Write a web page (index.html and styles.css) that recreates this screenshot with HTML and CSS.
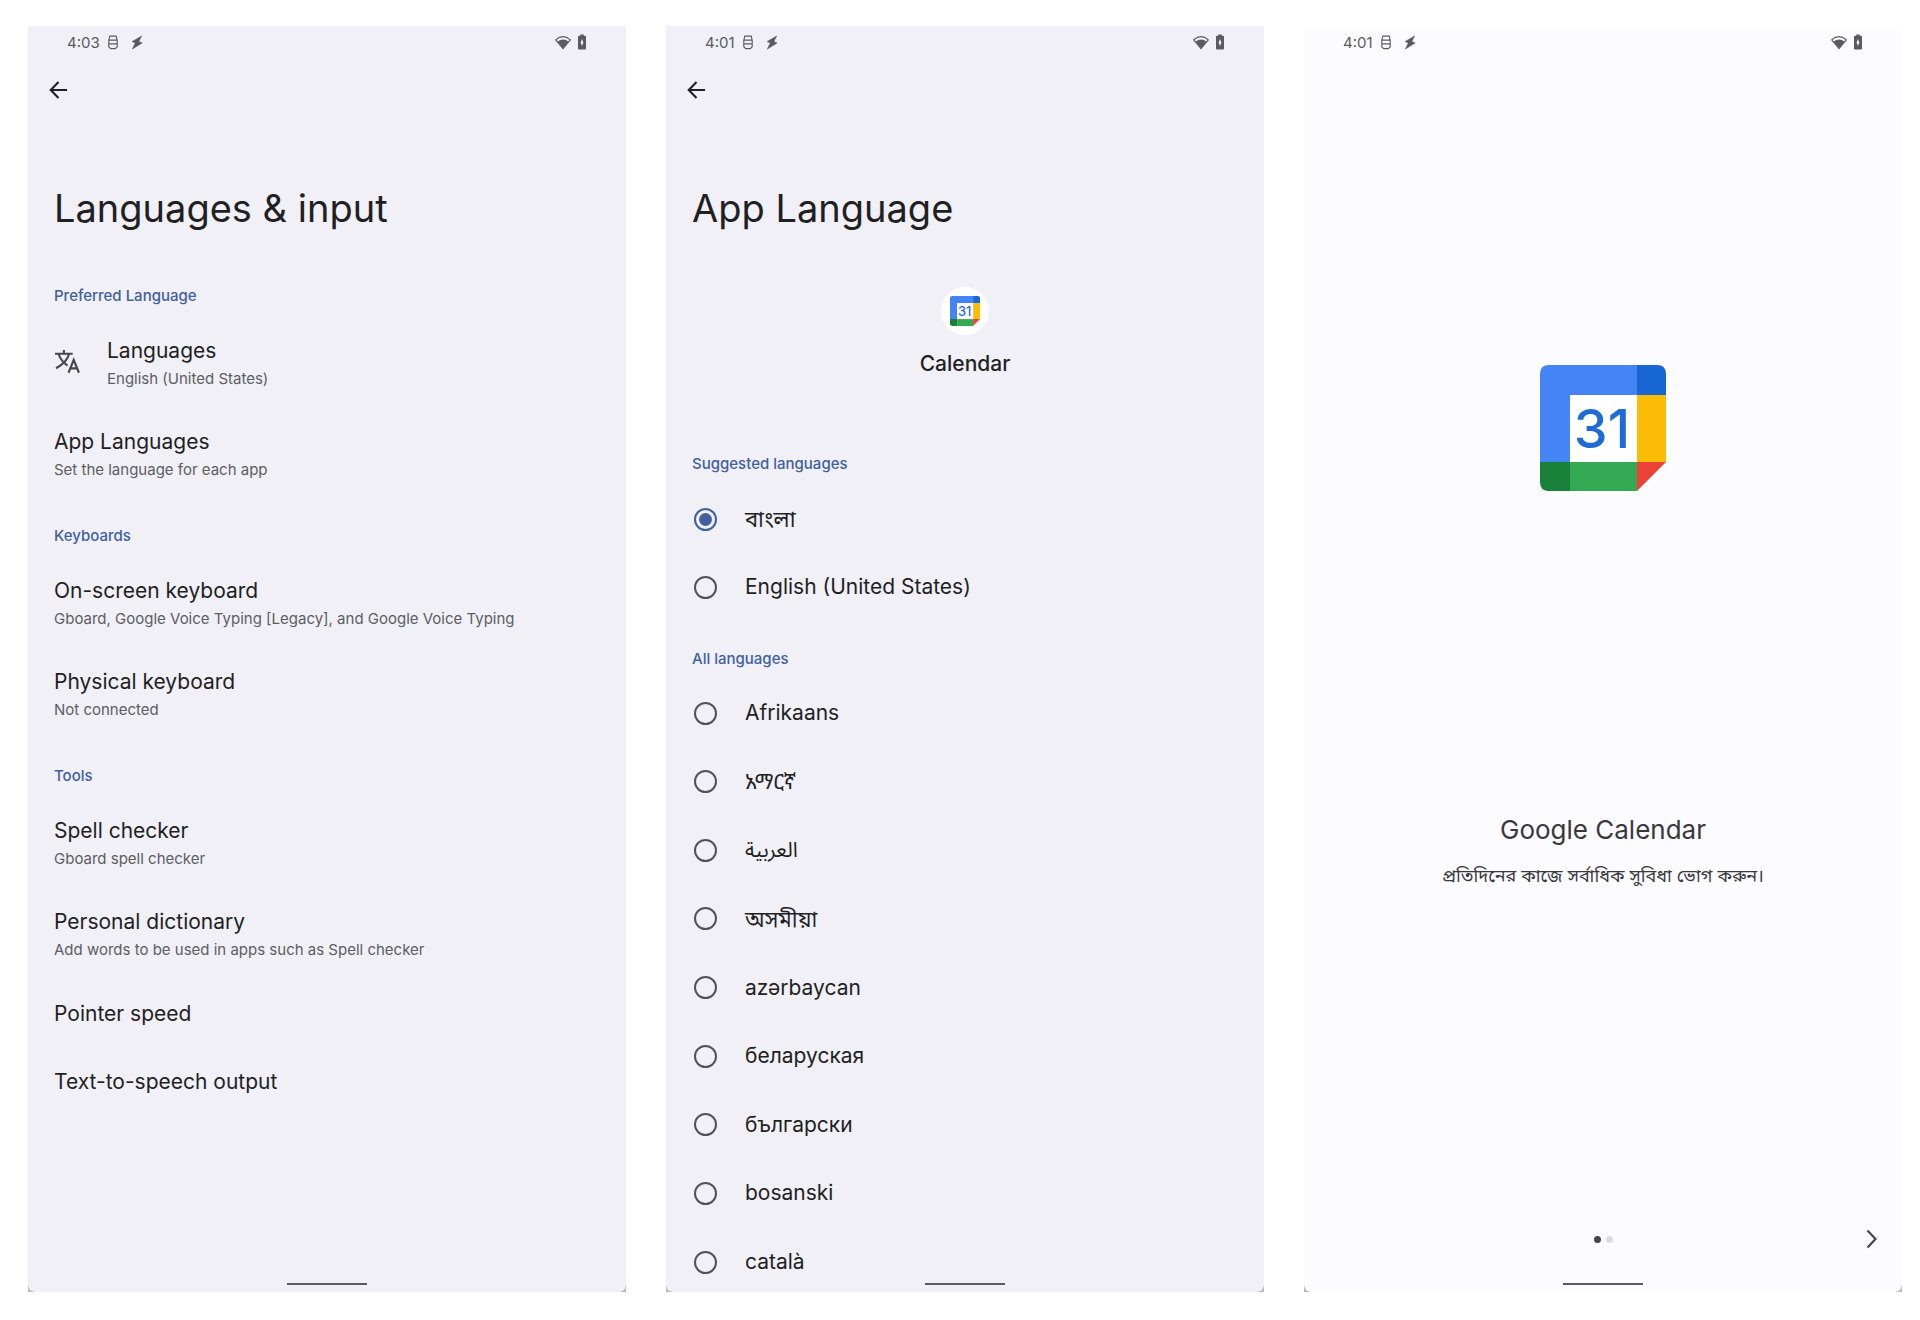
FILE: index.html
```
<!DOCTYPE html>
<html lang="en">
<head>
<meta charset="utf-8">
<title>App languages</title>
<meta name="viewport" content="width=device-width, initial-scale=1">
<link rel="stylesheet" href="styles.css">
</head>
<body>
<svg class="defs" aria-hidden="true">
  <symbol id="i-db" viewBox="0 0 12 16"><path d="M2.500 1.200h7l.8 4.300h-8.600zM1.500 5.500h9v7l-2 2h-5l-2-2zM2 9.500h8" fill="none" stroke="currentColor" stroke-width="1.200"/></symbol>
  <symbol id="i-bolt" viewBox="0 0 12 16"><path d="M11 1 .8 7l3.400 1.500L1 15l10.500-6.500-3.600-1.700z" fill="currentColor" stroke="currentColor" stroke-width=".6"/></symbol>
  <symbol id="i-wifi" viewBox="0 0 18 16"><path d="M1.200 5.200Q9-1.500 16.800 5.200L9 14.500z" fill="none" stroke="currentColor" stroke-width="1.300"/><path d="M3.200 7Q9 2.500 14.800 7L9 14.500z" fill="currentColor"/></symbol>
  <symbol id="i-batt" viewBox="0 0 10 18"><path d="M3 .5h4V2h1.500Q9.500 2 9.500 3v13q0 1.500-1 1.500h-7q-1 0-1-1.500V3q0-1 1-1H3z" fill="currentColor"/><path d="M5 5.500 3.500 9.500 5 13.500 6.500 9.500z" fill="#f4f4f8"/></symbol>
  <symbol id="i-back" viewBox="0 0 20 20"><path d="M19 10H2M10 1.500 1.800 10l8.200 8.500" fill="none" stroke="currentColor" stroke-width="2.200"/></symbol>
  <symbol id="i-next" viewBox="0 0 12 20"><path d="m1.500 1.500 8 8.500-8 8.500" fill="none" stroke="currentColor" stroke-width="2.200"/></symbol>
  <symbol id="i-translate" viewBox="0 0 26 24"><path d="M1 4.500h17M9.500 1v3.500M14.500 4.500C13.500 9.500 9 14.500 2 18.500M4.500 5c1.500 4.500 4.500 8 8.500 11" fill="none" stroke="currentColor" stroke-width="2"/><path d="M14 22.800 19 10.500l5 12.300M15.700 18.600h6.600" fill="none" stroke="currentColor" stroke-width="2.100"/></symbol>
  <symbol id="i-cal" viewBox="0 0 126 126">
    <path d="M9 0h88v30H30v67H0V9Q0 0 9 0z" fill="#4484f4"/>
    <path d="M97 0h20q9 0 9 9v21H97z" fill="#1967d2"/>
    <path d="M97 30h29v67H97z" fill="#fbbc05"/>
    <path d="M30 30h67v67H30z" fill="#fff"/>
    <path d="M30 97h67v29H30z" fill="#34a853"/>
    <path d="M0 97h30v29H9Q0 126 0 117z" fill="#188038"/>
    <path d="M97 97h29l-29 29z" fill="#ea4335"/>
    <text x="62" y="83" text-anchor="middle" class="cal-num">31</text>
  </symbol>
</svg>

<main class="screens">
  <section class="screen">
    <div class="status"><span>4:03</span><svg class="s-db"><use href="#i-db"/></svg><svg class="s-bolt"><use href="#i-bolt"/></svg><svg class="s-wifi"><use href="#i-wifi"/></svg><svg class="s-batt"><use href="#i-batt"/></svg></div>
    <button class="back" aria-label="Back"><svg><use href="#i-back"/></svg></button>
    <h1>Languages &amp; input</h1>
    <h2>Preferred Language</h2>
    <a class="row with-icon" href="#languages"><svg><use href="#i-translate"/></svg><span class="text"><b>Languages</b><small>English (United States)</small></span></a>
    <a class="row" href="#app-languages"><span class="text"><b>App Languages</b><small>Set the language for each app</small></span></a>
    <h2>Keyboards</h2>
    <a class="row" href="#on-screen"><span class="text"><b>On-screen keyboard</b><small>Gboard, Google Voice Typing [Legacy], and Google Voice Typing</small></span></a>
    <a class="row" href="#physical"><span class="text"><b>Physical keyboard</b><small>Not connected</small></span></a>
    <h2>Tools</h2>
    <a class="row" href="#spell"><span class="text"><b>Spell checker</b><small>Gboard spell checker</small></span></a>
    <a class="row" href="#dictionary"><span class="text"><b>Personal dictionary</b><small>Add words to be used in apps such as Spell checker</small></span></a>
    <a class="row single" href="#pointer"><span class="text"><b>Pointer speed</b></span></a>
    <a class="row single" href="#tts"><span class="text"><b>Text-to-speech output</b></span></a>
    <div class="home"></div>
  </section>

  <section class="screen">
    <div class="status"><span>4:01</span><svg class="s-db"><use href="#i-db"/></svg><svg class="s-bolt"><use href="#i-bolt"/></svg><svg class="s-wifi"><use href="#i-wifi"/></svg><svg class="s-batt"><use href="#i-batt"/></svg></div>
    <button class="back" aria-label="Back"><svg><use href="#i-back"/></svg></button>
    <h1>App Language</h1>
    <div class="app"><span class="badge"><svg><use href="#i-cal"/></svg></span><strong>Calendar</strong></div>
    <h2>Suggested languages</h2>
    <div class="options suggested">
      <label><input type="radio" name="lang" checked><span lang="bn">বাংলা</span></label>
      <label><input type="radio" name="lang"><span>English (United States)</span></label>
    </div>
    <h2>All languages</h2>
    <div class="options all">
      <label><input type="radio" name="lang"><span lang="af">Afrikaans</span></label>
      <label><input type="radio" name="lang"><span lang="am">አማርኛ</span></label>
      <label><input type="radio" name="lang"><span lang="ar">العربية</span></label>
      <label><input type="radio" name="lang"><span lang="as">অসমীয়া</span></label>
      <label><input type="radio" name="lang"><span lang="az">azərbaycan</span></label>
      <label><input type="radio" name="lang"><span lang="be">беларуская</span></label>
      <label><input type="radio" name="lang"><span lang="bg">български</span></label>
      <label><input type="radio" name="lang"><span lang="bs">bosanski</span></label>
      <label><input type="radio" name="lang"><span lang="ca">català</span></label>
    </div>
    <div class="home"></div>
  </section>

  <section class="screen welcome">
    <div class="status"><span>4:01</span><svg class="s-db"><use href="#i-db"/></svg><svg class="s-bolt"><use href="#i-bolt"/></svg><svg class="s-wifi"><use href="#i-wifi"/></svg><svg class="s-batt"><use href="#i-batt"/></svg></div>
    <svg class="logo"><use href="#i-cal"/></svg>
    <h3>Google Calendar</h3>
    <p lang="bn">প্রতিদিনের কাজে সর্বাধিক সুবিধা ভোগ করুন।</p>
    <div class="pager"><span class="dots"><i class="on"></i><i></i></span><button aria-label="Next"><svg><use href="#i-next"/></svg></button></div>
    <div class="home"></div>
  </section>
</main>
</body>
</html>
```
FILE: styles.css
```
* { box-sizing: border-box; }
body {
  margin: 0;
  background: #fff;
  color: #1f1f24;
  font-family: Inter, "Noto Sans", "Noto Sans Bengali", "Noto Sans Ethiopic", "Noto Sans Arabic", sans-serif;
}
.defs { display: none; }
h1, h2, h3, p { margin: 0; font-weight: 400; }
button { border: 0; padding: 0; background: none; color: inherit; display: flex; }

.screens {
  display: grid;
  grid-template-columns: repeat(3, 1fr);
  gap: 40px;
  min-height: 100vh;
  padding: 26px 18px 28px 28px;
}
.screen {
  position: relative;
  display: flex;
  flex-direction: column;
  background:
    radial-gradient(circle at 100% 0, transparent 5px, #b8b8bc 6px) 0 100% / 6px 6px no-repeat,
    radial-gradient(circle at 0 0, transparent 5px, #b8b8bc 6px) 100% 100% / 6px 6px no-repeat,
    #f0f0f6;
}
.screen.welcome { background-color: #fcfbff; }

.status {
  display: flex;
  align-items: center;
  height: 32px;
  padding: 0 39px;
  color: #5a5a60;
  font-size: 15px;
}
.s-db { width: 12px; height: 15px; margin-left: 7px; }
.s-bolt { width: 12px; height: 15px; margin-left: 12px; }
.s-wifi { width: 18px; height: 15px; margin-left: auto; }
.s-batt { width: 10px; height: 16px; margin-left: 5px; }

.back { margin: 22px 0 0 21px; align-self: flex-start; }
.back svg { width: 19px; height: 20px; }
h1 { margin: 82px 26px 0; font-size: 38px; line-height: 52px; }
h2 {
  height: 58px;
  padding: 25px 26px 0;
  color: #41609f;
  font-size: 15px;
  line-height: 20px;
  font-weight: 500;
}
h1 + h2 { margin-top: 27px; }

.row {
  display: flex;
  align-items: center;
  gap: 26px;
  height: 91px;
  padding: 0 26px 2px;
  color: inherit;
  text-decoration: none;
}
.row.single { height: 68px; }
.row svg { width: 27px; height: 25px; margin-bottom: 4px; color: #46464b; }
.text { display: flex; flex-direction: column; }
.text b { font-size: 21px; line-height: 30px; font-weight: 400; }
.text small { color: #5d5d63; font-size: 15px; line-height: 26px; }

.app { display: flex; flex-direction: column; align-items: center; gap: 14px; margin-top: 53px; }
.badge { display: grid; place-items: center; width: 48px; height: 48px; border-radius: 50%; background: #fff; }
.badge svg { width: 30px; height: 30px; }
.app strong { font-size: 21px; line-height: 30px; font-weight: 500; }
.app + h2 { height: 56px; margin-top: 50px; }
.options { display: flex; flex-direction: column; }
.suggested label { height: 68px; }
.suggested + h2 { height: 62px; padding-top: 28px; }
.all { flex: 1; justify-content: space-between; }
.all label { height: 60px; }
.options label {
  display: flex;
  align-items: center;
  gap: 28px;
  padding-left: 28px;
  font-size: 21px;
  line-height: 30px;
}
.options [lang="bn"], .options [lang="as"] { font-size: 22px; }
input[type="radio"] {
  appearance: none;
  display: grid;
  place-items: center;
  width: 23px;
  height: 23px;
  margin: 0;
  border: 2px solid #515157;
  border-radius: 50%;
}
input[type="radio"]:checked { border-color: #41609f; }
input[type="radio"]:checked::before { content: ""; width: 13px; height: 13px; border-radius: 50%; background: #41609f; }

.home {
  position: absolute;
  left: 50%;
  bottom: 7px;
  width: 80px;
  height: 2px;
  margin-left: -40px;
  background: #5a5a5f;
}

.logo { width: 126px; height: 126px; margin: 307px auto 0; }
.cal-num { font: 500 54px Inter, sans-serif; fill: #1f6bd6; }
.welcome h3 { margin-top: 321px; text-align: center; font-size: 26px; line-height: 36px; color: #38383c; }
.welcome p { margin-top: 14px; text-align: center; font-size: 18px; line-height: 28px; color: #38383c; }
.pager { display: flex; justify-content: center; align-items: center; margin: auto 24px 43px; }
.dots { display: flex; gap: 5px; margin: 0 auto; padding-left: 12px; }
.dots i { width: 7px; height: 7px; border-radius: 50%; background: #dcdce0; }
.dots .on { background: #444448; }
.pager svg { width: 12px; height: 20px; color: #46464b; }
```
